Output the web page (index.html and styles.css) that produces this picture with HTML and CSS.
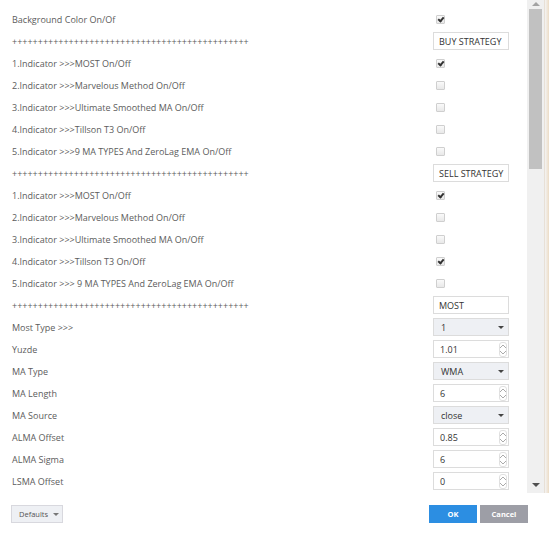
FILE: index.html
```html
<!DOCTYPE html>
<html lang="en">
<head>
  <meta charset="UTF-8" />
  <title>Indicator Settings</title>
  <link rel="stylesheet" href="styles.css">
</head>
<body>
  <div class="dialog">
    <div class="scroll-area">
      <div class="content">
        <div class="row"><span class="label">Background Color On/Of</span><span class="check on"></span></div>
        <div class="row"><span class="label">++++++++++++++++++++++++++++++++++++++++++++++</span><span class="text-input">BUY STRATEGY</span></div>
        <div class="row"><span class="label">1.Indicator &gt;&gt;&gt;MOST On/Off</span><span class="check on"></span></div>
        <div class="row"><span class="label">2.Indicator &gt;&gt;&gt;Marvelous Method On/Off</span><span class="check"></span></div>
        <div class="row"><span class="label">3.Indicator &gt;&gt;&gt;Ultimate Smoothed MA On/Off</span><span class="check"></span></div>
        <div class="row"><span class="label">4.Indicator &gt;&gt;&gt;Tillson T3 On/Off</span><span class="check"></span></div>
        <div class="row"><span class="label">5.Indicator &gt;&gt;&gt;9 MA TYPES And ZeroLag EMA On/Off</span><span class="check"></span></div>
        <div class="row"><span class="label">++++++++++++++++++++++++++++++++++++++++++++++</span><span class="text-input">SELL STRATEGY</span></div>
        <div class="row"><span class="label">1.Indicator &gt;&gt;&gt;MOST On/Off</span><span class="check on"></span></div>
        <div class="row"><span class="label">2.Indicator &gt;&gt;&gt;Marvelous Method On/Off</span><span class="check"></span></div>
        <div class="row"><span class="label">3.Indicator &gt;&gt;&gt;Ultimate Smoothed MA On/Off</span><span class="check"></span></div>
        <div class="row"><span class="label">4.Indicator &gt;&gt;&gt;Tillson T3 On/Off</span><span class="check on"></span></div>
        <div class="row"><span class="label">5.Indicator &gt;&gt;&gt; 9 MA TYPES And ZeroLag EMA On/Off</span><span class="check"></span></div>
        <div class="row"><span class="label">++++++++++++++++++++++++++++++++++++++++++++++</span><span class="text-input">MOST</span></div>
        <div class="row"><span class="label">Most Type &gt;&gt;&gt;</span><span class="select">1</span></div>
        <div class="row"><span class="label">Yuzde</span><span class="num-input">1.01</span></div>
        <div class="row"><span class="label">MA Type</span><span class="select">WMA</span></div>
        <div class="row"><span class="label">MA Length</span><span class="num-input">6</span></div>
        <div class="row"><span class="label">MA Source</span><span class="select">close</span></div>
        <div class="row"><span class="label">ALMA Offset</span><span class="num-input">0.85</span></div>
        <div class="row"><span class="label">ALMA Sigma</span><span class="num-input">6</span></div>
        <div class="row"><span class="label">LSMA Offset</span><span class="num-input">0</span></div>
      </div>
      <div class="scrollbar">
        <div class="arrow up"></div>
        <div class="thumb"></div>
        <div class="arrow down"></div>
      </div>
      <div class="edge"></div>
    </div>
    <div class="footer">
      <span class="defaults">Defaults</span>
      <div class="actions">
        <span class="btn ok">OK</span>
        <span class="btn cancel">Cancel</span>
      </div>
    </div>
  </div>
</body>
</html>
```
FILE: styles.css
```css
body {
  margin: 0;
  padding: 0;
  font-family: 'Open Sans', 'DejaVu Sans', sans-serif;
  background: #fff;
  overflow: hidden;
}

.dialog {
  width: 549px;
  height: 535px;
  display: flex;
  flex-direction: column;
}

.scroll-area {
  height: 493px;
  display: flex;
  overflow: hidden;
}

.content {
  flex: 1;
  padding: 8px 18px 0 12px;
  overflow: hidden;
}

.row {
  height: 22px;
  display: flex;
  align-items: center;
  justify-content: space-between;
}

.label {
  font-size: 9px;
  color: #5c5c5c;
  white-space: nowrap;
}

.check {
  width: 7px;
  height: 7px;
  margin-right: 64px;
  border: 1px solid #cfcfcf;
  border-radius: 1px;
  background: linear-gradient(#fafafa, #e8e8e8);
  position: relative;
}

.check.on::after {
  content: "";
  position: absolute;
  left: 2px;
  top: 0;
  width: 2px;
  height: 4px;
  border: solid #333;
  border-width: 0 2px 2px 0;
  transform: rotate(40deg);
}

.text-input,
.num-input,
.select {
  box-sizing: border-box;
  width: 76px;
  height: 18px;
  border: 1px solid #dcdcdc;
  font-size: 9px;
  color: #333;
  padding-left: 6px;
  display: flex;
  align-items: center;
  position: relative;
  white-space: nowrap;
}

.text-input {
  padding-left: 5px;
}

.select {
  background: #eef0f4;
  padding-left: 7px;
}

.select::after {
  content: "";
  position: absolute;
  right: 4px;
  top: 7px;
  border-left: 3px solid transparent;
  border-right: 3px solid transparent;
  border-top: 3px solid #444;
}

.num-input::after {
  content: "";
  position: absolute;
  right: 1px;
  top: 1px;
  width: 6px;
  height: 13px;
  border: 1px solid #e0e0e0;
  border-radius: 3px;
  background:
    linear-gradient(135deg, transparent 45%, #aaa 45%, #aaa 62%, transparent 62%) 0 2px / 3px 3px no-repeat,
    linear-gradient(225deg, transparent 45%, #aaa 45%, #aaa 62%, transparent 62%) 3px 2px / 3px 3px no-repeat,
    linear-gradient(45deg, transparent 45%, #aaa 45%, #aaa 62%, transparent 62%) 0 8px / 3px 3px no-repeat,
    linear-gradient(315deg, transparent 45%, #aaa 45%, #aaa 62%, transparent 62%) 3px 8px / 3px 3px no-repeat;
}

.scrollbar {
  width: 17px;
  background: #f0f0f0;
  display: flex;
  flex-direction: column;
  align-items: center;
}

.arrow {
  height: 9px;
  width: 17px;
  position: relative;
}

.arrow::after {
  content: "";
  position: absolute;
  left: 5px;
  border-left: 4px solid transparent;
  border-right: 4px solid transparent;
}

.arrow.up::after {
  top: 2px;
  border-bottom: 4px solid #a3a3a3;
}

.arrow.down {
  margin-top: auto;
  margin-bottom: 3px;
}

.arrow.down::after {
  top: 2px;
  border-top: 4px solid #505050;
}

.thumb {
  width: 13px;
  height: 160px;
  background: #c1c1c1;
}

.edge {
  width: 4px;
  background: linear-gradient(to right, #f4f4f4, #ecdcc6);
  border-left: 1px solid #e8e0d6;
}

.footer {
  flex: 1;
  display: flex;
  align-items: center;
  justify-content: space-between;
  padding: 0 21px 0 11px;
}

.defaults {
  box-sizing: border-box;
  height: 18px;
  width: 52px;
  border: 1px solid #d8d8de;
  background: #eef0f4;
  font-size: 7.5px;
  color: #555;
  display: flex;
  align-items: center;
  padding-left: 7px;
  gap: 5px;
}

.defaults::after {
  content: "";
  border-left: 3px solid transparent;
  border-right: 3px solid transparent;
  border-top: 3px solid #777;
}

.actions {
  display: flex;
  gap: 3px;
}

.btn {
  width: 48px;
  height: 18px;
  color: #fff;
  font-size: 7.5px;
  font-weight: bold;
  display: flex;
  align-items: center;
  justify-content: center;
}

.ok {
  background: #2c8ee2;
}

.cancel {
  background: #9d9ea6;
}
```
